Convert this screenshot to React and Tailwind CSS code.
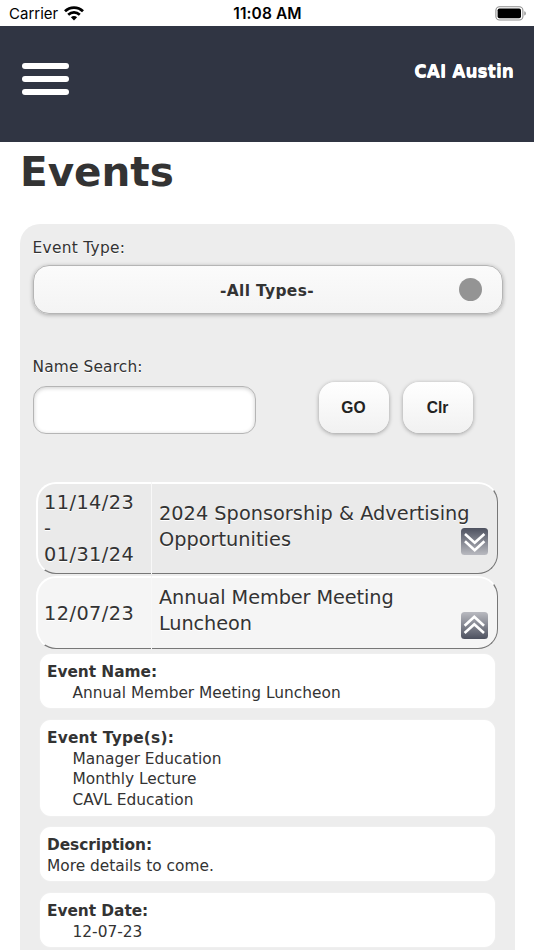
import { useState } from "react";

//ICONS
const Wifi = () => (
  <svg width="20" height="15" viewBox="0 0 20 15" fill="none" stroke="#000" strokeWidth="2.7">
    <path d="M1 5.3C6 0.3 14 0.3 19 5.3" />
    <path d="M4.2 8.7C7.6 5.5 12.4 5.5 15.8 8.7" />
    <path d="M6.9 11.2C8.8 9.5 11.2 9.5 13.1 11.2L10 14.4Z" fill="#000" stroke="none" />
  </svg>
);

const Battery = () => (
  <svg width="32" height="15" viewBox="0 0 32 15">
    <rect x="0.9" y="0.8" width="27" height="13.2" rx="3.6" fill="none" stroke="#8f8f8f" strokeWidth="1.1" />
    <rect x="2.6" y="2.5" width="23.4" height="9.8" rx="1.8" fill="#000" />
    <path d="M29.3 5.2C31.3 5.8 31.3 9 29.3 9.6Z" fill="#8f8f8f" />
  </svg>
);

const Toggle = ({ open }) => (
  <svg width="27" height="27" viewBox="0 0 27 27" className={open ? "rotate-180" : ""}>
    <defs>
      <linearGradient id="toggleBg" x1="0" y1="0" x2="0" y2="1">
        <stop offset="0" stopColor="#4d515f" />
        <stop offset="1" stopColor="#b9bac0" />
      </linearGradient>
    </defs>
    <rect width="27" height="27" rx="3.5" fill="url(#toggleBg)" />
    <path d="M4 6L13.7 14.8L23.4 6M4 13.3L13.7 22.3L23.4 13.3" fill="none" stroke="#fff" strokeWidth="2.6" />
  </svg>
);

const events = [
  {
    id: 1,
    dates: ["11/14/23", "-", "01/31/24"],
    title: ["2024 Sponsorship & Advertising", "Opportunities"],
  },
  {
    id: 2,
    dates: ["12/07/23"],
    title: ["Annual Member Meeting", "Luncheon"],
    details: [
      { label: "Event Name:", lines: ["Annual Member Meeting Luncheon"] },
      { label: "Event Type(s):", lines: ["Manager Education", "Monthly Lecture", "CAVL Education"], wide: true },
      { label: "Description:", lines: ["More details to come."], flush: true },
      { label: "Event Date:", lines: ["12-07-23"] },
    ],
  },
];

const EventRow = ({ event, open, onToggle }) => (
  <div
    onClick={onToggle}
    className={`flex ml-[16px] w-[462px] text-[19.3px] leading-[26px] [text-shadow:0_1px_0_#fff] cursor-pointer ${
      open ? "h-[73px] *:bg-[#f5f5f5]" : "h-[92px] mb-[2px] *:bg-[#eaeaea]"
    }`}
  >
    <div className="w-[115px] shrink-0 flex flex-col justify-center rounded-l-[20px] border-t-2 border-l-2 border-b border-t-white border-l-white border-b-[#777] pl-[6px] pt-[1px] tracking-[0.45px]">
      {event.dates.map((d) => (
        <p key={d}>{d}</p>
      ))}
    </div>
    <div className="w-px !bg-[#f8f8f8]"></div>
    <div className="flex-1 flex justify-between rounded-r-[20px] border-t-2 border-r border-b border-t-white border-r-[#777] border-b-[#777] pl-[7px]">
      <div className={open ? "pt-[7px] tracking-[-0.08px]" : "pt-[17px] tracking-[0.03px]"}>
        {event.title.map((t) => (
          <p key={t} className="whitespace-nowrap">{t}</p>
        ))}
      </div>
      <div className={`w-0 flex justify-end mr-[9px] ${open ? "pt-[34px]" : "pt-[44px]"}`}>
        <div className="shrink-0">
          <Toggle open={open} />
        </div>
      </div>
    </div>
  </div>
);

const Detail = ({ label, lines, flush, wide }) => (
  <div className="bg-white rounded-[11px] pl-[7px] pt-[8px] pb-[4.8px] text-[15.4px] leading-[20.7px] shadow-[0_0_2px_#fff8]">
    <p className={wide ? "font-bold tracking-[0.2px]" : "font-bold tracking-[-0.05px]"}>{label}</p>
    {lines.map((l) => (
      <p key={l} className={flush ? "" : "pl-[25.5px]"}>{l}</p>
    ))}
  </div>
);

const App = () => {
  const [openId, setOpenId] = useState(2);
  const [search, setSearch] = useState("");

  return (
    <div className="w-[534px] h-[950px] overflow-hidden bg-white text-[#333] font-['DejaVu_Sans',sans-serif]">
      <div className="h-[26px] grid grid-cols-3 items-center pl-[9px] pr-[6px] text-black font-[Inter,sans-serif] text-[15px]">
        <div className="flex items-center gap-[6px]">
          <span className="pt-[2px]">Carrier</span>
          <Wifi />
        </div>
        <span className="text-center font-semibold pt-[2px] pr-[2px] text-[15.5px] tracking-[0.1px]">11:08 AM</span>
        <div className="flex justify-end pr-[1px]">
          <Battery />
        </div>
      </div>

      <header className="h-[116px] bg-[#303543] flex justify-between pl-[22px] pr-[20px]">
        <div className="flex flex-col gap-[7px] pt-[37px]">
          <div className="w-[47px] h-[6px] rounded-full bg-white"></div>
          <div className="w-[47px] h-[6px] rounded-full bg-white"></div>
          <div className="w-[47px] h-[6px] rounded-full bg-white"></div>
        </div>
        <span className="pt-[33px] text-[17px] leading-[24px] font-bold text-white tracking-[0.05px] [text-shadow:0_1px_0_#fff]">CAI Austin</span>
      </header>

      <h1 className="pl-[20px] pt-[5px] h-[82px] text-[40.5px] leading-[50px] font-bold">Events</h1>

      <main className="ml-[20px] w-[495px] h-[800px] bg-[#ededed] rounded-[20px] pt-[13px]">
        <div className="px-[12.5px] text-[15.4px] leading-[22px] [text-shadow:0_1px_0_#fff]">
          <p className="tracking-[0.3px]">Event Type:</p>
          <button className="mt-[6px] w-[470px] h-[49px] flex items-center rounded-[16px] border border-[#b5b5b5] bg-linear-to-b from-[#fbfbfb] to-[#f4f4f4] shadow-[0_1px_4px_#0000004d] font-bold">
            <span className="flex-1 pl-[42px] pt-[2px] tracking-[0.35px]">-All Types-</span>
            <span className="size-[23px] mr-[20px] rounded-full bg-[#949494]"></span>
          </button>

          <p className="mt-[42px] tracking-[0.15px]">Name Search:</p>
          <div className="flex items-center mt-[3px]">
            <input
              value={search}
              onChange={(e) => setSearch(e.target.value)}
              className="w-[223px] h-[48px] mt-[5px] px-3 rounded-[13px] border border-[#b5b5b5] bg-white shadow-[inset_0_1px_4px_#00000033]"
            />
            <button className="ml-[63px] w-[70px] h-[51px] rounded-[16px] bg-linear-to-b from-white to-[#f1f1f1] shadow-[0_1px_4px_#00000059] font-['Liberation_Sans',sans-serif] font-bold text-[15.6px] text-[#222]">
              GO
            </button>
            <button
              onClick={() => setSearch("")}
              className="ml-[14px] w-[70px] h-[51px] rounded-[16px] bg-linear-to-b from-white to-[#f1f1f1] shadow-[0_1px_4px_#00000059] font-['Liberation_Sans',sans-serif] font-bold text-[15.6px] text-[#222]"
            >
              Clr
            </button>
          </div>
        </div>

        <div className="mt-[48px]">
          {events.map((event) => (
            <div key={event.id}>
              <EventRow
                event={event}
                open={openId === event.id}
                onToggle={() => setOpenId(openId === event.id ? null : event.id)}
              />
              {openId === event.id && event.details && (
                <div className="flex flex-col gap-[11.7px] mt-[5px] ml-[20px] w-[455px]">
                  {event.details.map((d) => (
                    <Detail key={d.label} {...d} />
                  ))}
                </div>
              )}
            </div>
          ))}
        </div>
      </main>
    </div>
  );
};

export default App;
